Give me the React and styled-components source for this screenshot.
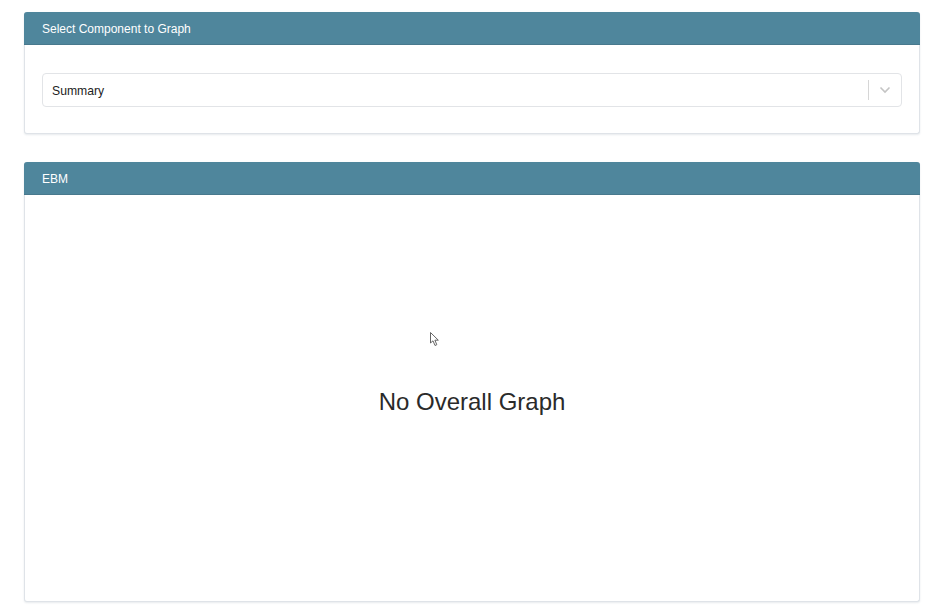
import React from "react";
import styled, { createGlobalStyle } from "styled-components";

const Global = createGlobalStyle`
  html, body { margin: 0; padding: 0; background: #fff; }
  body { font-family: "Helvetica Neue", "Liberation Sans", Arial, sans-serif; color: #222; }
`;

const Page = styled.div`
  position: relative;
  width: 940px;
  height: 608px;
  box-sizing: border-box;
  padding: 12px 20px 0 24px;
  display: flex;
  flex-direction: column;
  gap: 28px;
  overflow: hidden;
`;

const Card = styled.section`
  display: flex;
  flex-direction: column;
  width: 896px;
  box-sizing: border-box;
  border: 1px solid #dfe3e8;
  border-top: none;
  border-radius: 3px;
  box-shadow: 0 1px 2px rgba(60, 80, 110, 0.12);
  background: #fff;
  height: ${(p) => p.$h}px;
`;

const Header = styled.div`
  height: 33px;
  box-sizing: border-box;
  background: #4f869c;
  border-radius: 3px 3px 0 0;
  margin: 0 -1px;
  padding: 2px 18px 0;
  display: flex;
  align-items: center;
  color: #fff;
  font-size: 12px;
  border-bottom: 1px solid #48798d;
`;

const Body = styled.div`
  flex: 1;
  padding: 28px 17px 26px;
  display: flex;
  flex-direction: column;
`;

const Select = styled.div`
  height: 34px;
  box-sizing: border-box;
  border: 1px solid #e2e4e7;
  border-radius: 4px;
  display: flex;
  align-items: center;
  padding-left: 9px;
  font-size: 12.2px;
  color: #222;
`;

const Value = styled.div`
  flex: 1;
  padding-top: 1px;
`;

const Separator = styled.span`
  width: 1px;
  height: 20px;
  background: #d6d6d6;
`;

const Indicator = styled.div`
  width: 32px;
  display: flex;
  justify-content: center;
  align-items: center;
  color: #c4c4c4;
`;

const Empty = styled.div`
  flex: 1;
  display: flex;
  align-items: center;
  justify-content: center;
  font-size: 24px;
  color: #2a2a2a;
  padding-top: 8px;
`;

const Cursor = styled.svg`
  position: absolute;
  left: 430px;
  top: 332px;
`;

export default function App() {
  return (
    <>
      <Global />
      <Page>
        <Card $h={122}>
          <Header>Select Component to Graph</Header>
          <Body>
            <Select>
              <Value>Summary</Value>
              <Separator />
              <Indicator>
                <svg width="12" height="8" viewBox="0 0 12 8">
                  <path d="M1.5 1.5 L6 6 L10.5 1.5" fill="none" stroke="currentColor" strokeWidth="1.6" />
                </svg>
              </Indicator>
            </Select>
          </Body>
        </Card>
        <Card $h={440}>
          <Header>EBM</Header>
          <Empty>No Overall Graph</Empty>
        </Card>
        <Cursor width="10" height="15" viewBox="0 0 10 15">
          <path d="M0.5 0.5 L0.5 11 L3 8.8 L5 13.5 L6.8 12.7 L4.9 8.2 L8.3 8.2 Z" fill="#fff" stroke="#555" strokeWidth="0.9" />
        </Cursor>
      </Page>
    </>
  );
}
